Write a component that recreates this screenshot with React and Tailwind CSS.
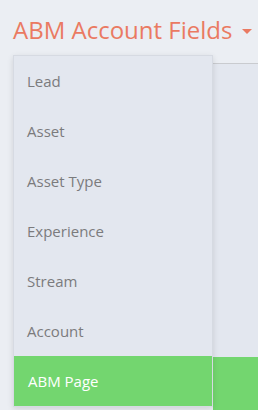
export default function App() {
  const items = ["Lead", "Asset", "Asset Type", "Experience", "Stream", "Account"];
  return (
    <div className="relative w-[258px] h-[410px] overflow-hidden bg-[#ebeef3]" style={{ fontFamily: '"Open Sans", sans-serif' }}>
      <div className="flex items-center pl-[13px] pt-[14px] h-[55px] items-start">
        <span className="text-[24px] leading-[32px] text-[#ea7a62]">ABM Account Fields</span>
        <svg width="10" height="6" viewBox="0 0 10 6" className="ml-[10px] mt-[15px]">
          <path d="M0 0 L10 0 L5 5 Z" fill="#ea7a62" />
        </svg>
      </div>
      <div className="absolute left-[213px] right-0 top-[63px] bottom-0 flex flex-col border-t border-[#c9cbcf] bg-[#e3e7ef]">
        <div className="mt-auto h-[53px] bg-[#73d66f]" />
      </div>
      <div className="absolute left-[13px] top-[55px] w-[200px] bg-[#e3e7ef] border border-[#d6dae2] shadow-[0_2px_6px_rgba(0,0,0,0.12)]">
        {items.map((t) => (
          <div key={t} className="h-[50px] flex items-center pl-[13px] text-[15px] text-[#7b7b7d]">{t}</div>
        ))}
        <div className="h-[50px] flex items-center pl-[14px] text-[15px] text-white bg-[#73d66f]">ABM Page</div>
      </div>
    </div>
  );
}
